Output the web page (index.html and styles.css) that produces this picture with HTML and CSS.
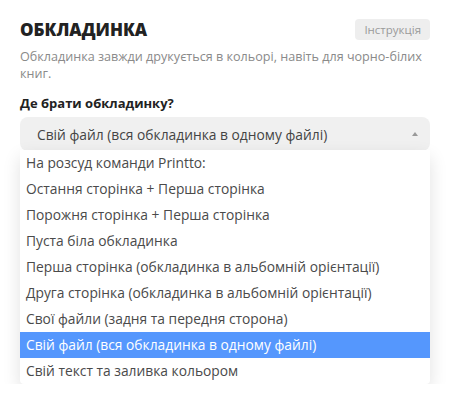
FILE: index.html
```html
<!DOCTYPE html>
<html lang="uk">
<head>
<meta charset="utf-8">
<link rel="stylesheet" href="styles.css">
</head>
<body>
<div class="panel">
  <div class="head">
    <h2 class="title">ОБКЛАДИНКА</h2>
    <span class="btn">Інструкція</span>
  </div>
  <p class="desc">Обкладинка завжди друкується в кольорі, навіть для чорно-білих книг.</p>
  <div class="label">Де брати обкладинку?</div>
  <div class="field">
    <div class="select">
      <span>Свій файл (вся обкладинка в одному файлі)</span>
      <span class="arrow"></span>
    </div>
    <ul class="menu">
      <li>На розсуд команди Printto:</li>
      <li>Остання сторінка + Перша сторінка</li>
      <li>Порожня сторінка + Перша сторінка</li>
      <li>Пуста біла обкладинка</li>
      <li>Перша сторінка (обкладинка в альбомній орієнтації)</li>
      <li>Друга сторінка (обкладинка в альбомній орієнтації)</li>
      <li>Свої файли (задня та передня сторона)</li>
      <li class="active">Свій файл (вся обкладинка в одному файлі)</li>
      <li>Свій текст та заливка кольором</li>
    </ul>
  </div>
</div>
</body>
</html>
```
FILE: styles.css
```css
* { box-sizing: border-box; }
body {
  margin: 0;
  background: #fff;
  font-family: "Open Sans", "DejaVu Sans", sans-serif;
  color: #444;
}
.panel {
  padding: 19px 20px 0 20px;
}
.head {
  display: flex;
  justify-content: space-between;
  align-items: center;
  height: 21px;
}
.title {
  margin: 0;
  font-size: 17px;
  font-weight: 800;
  color: #222;
  line-height: 22px;
  padding-top: 1px;
}
.btn {
  background: #eeeeee;
  color: #9a9a9a;
  font-size: 11.5px;
  height: 21px;
  line-height: 21px;
  padding: 0 9px;
  border-radius: 4px;
}
.desc {
  margin: 8px 0 0 0;
  font-size: 12.6px;
  line-height: 17px;
  color: #8a8a8a;
}
.label {
  margin-top: 13px;
  font-size: 13px;
  font-weight: 700;
  color: #222;
  line-height: 16px;
}
.field {
  margin-top: 6px;
}
.select {
  height: 34px;
  background: #f0f0f0;
  border-radius: 8px;
  display: flex;
  align-items: center;
  justify-content: space-between;
  padding: 0 12px 0 17px;
  font-size: 13.8px;
  color: #444;
}
.arrow {
  width: 0;
  height: 0;
  border-left: 3px solid transparent;
  border-right: 3px solid transparent;
  border-bottom: 4px solid #999;
}
.menu {
  margin: -1px 0 0 0;
  padding: 0;
  list-style: none;
  background: #fff;
  border-radius: 0 0 4px 4px;
  box-shadow: 0 7px 18px rgba(0, 0, 0, 0.12);
}
.menu li {
  height: 26px;
  line-height: 26px;
  padding: 0 6px;
  font-size: 13.8px;
  color: #4a4a4a;
  white-space: nowrap;
}
.menu li.active {
  background: #5597fd;
  color: #fff;
}
```
